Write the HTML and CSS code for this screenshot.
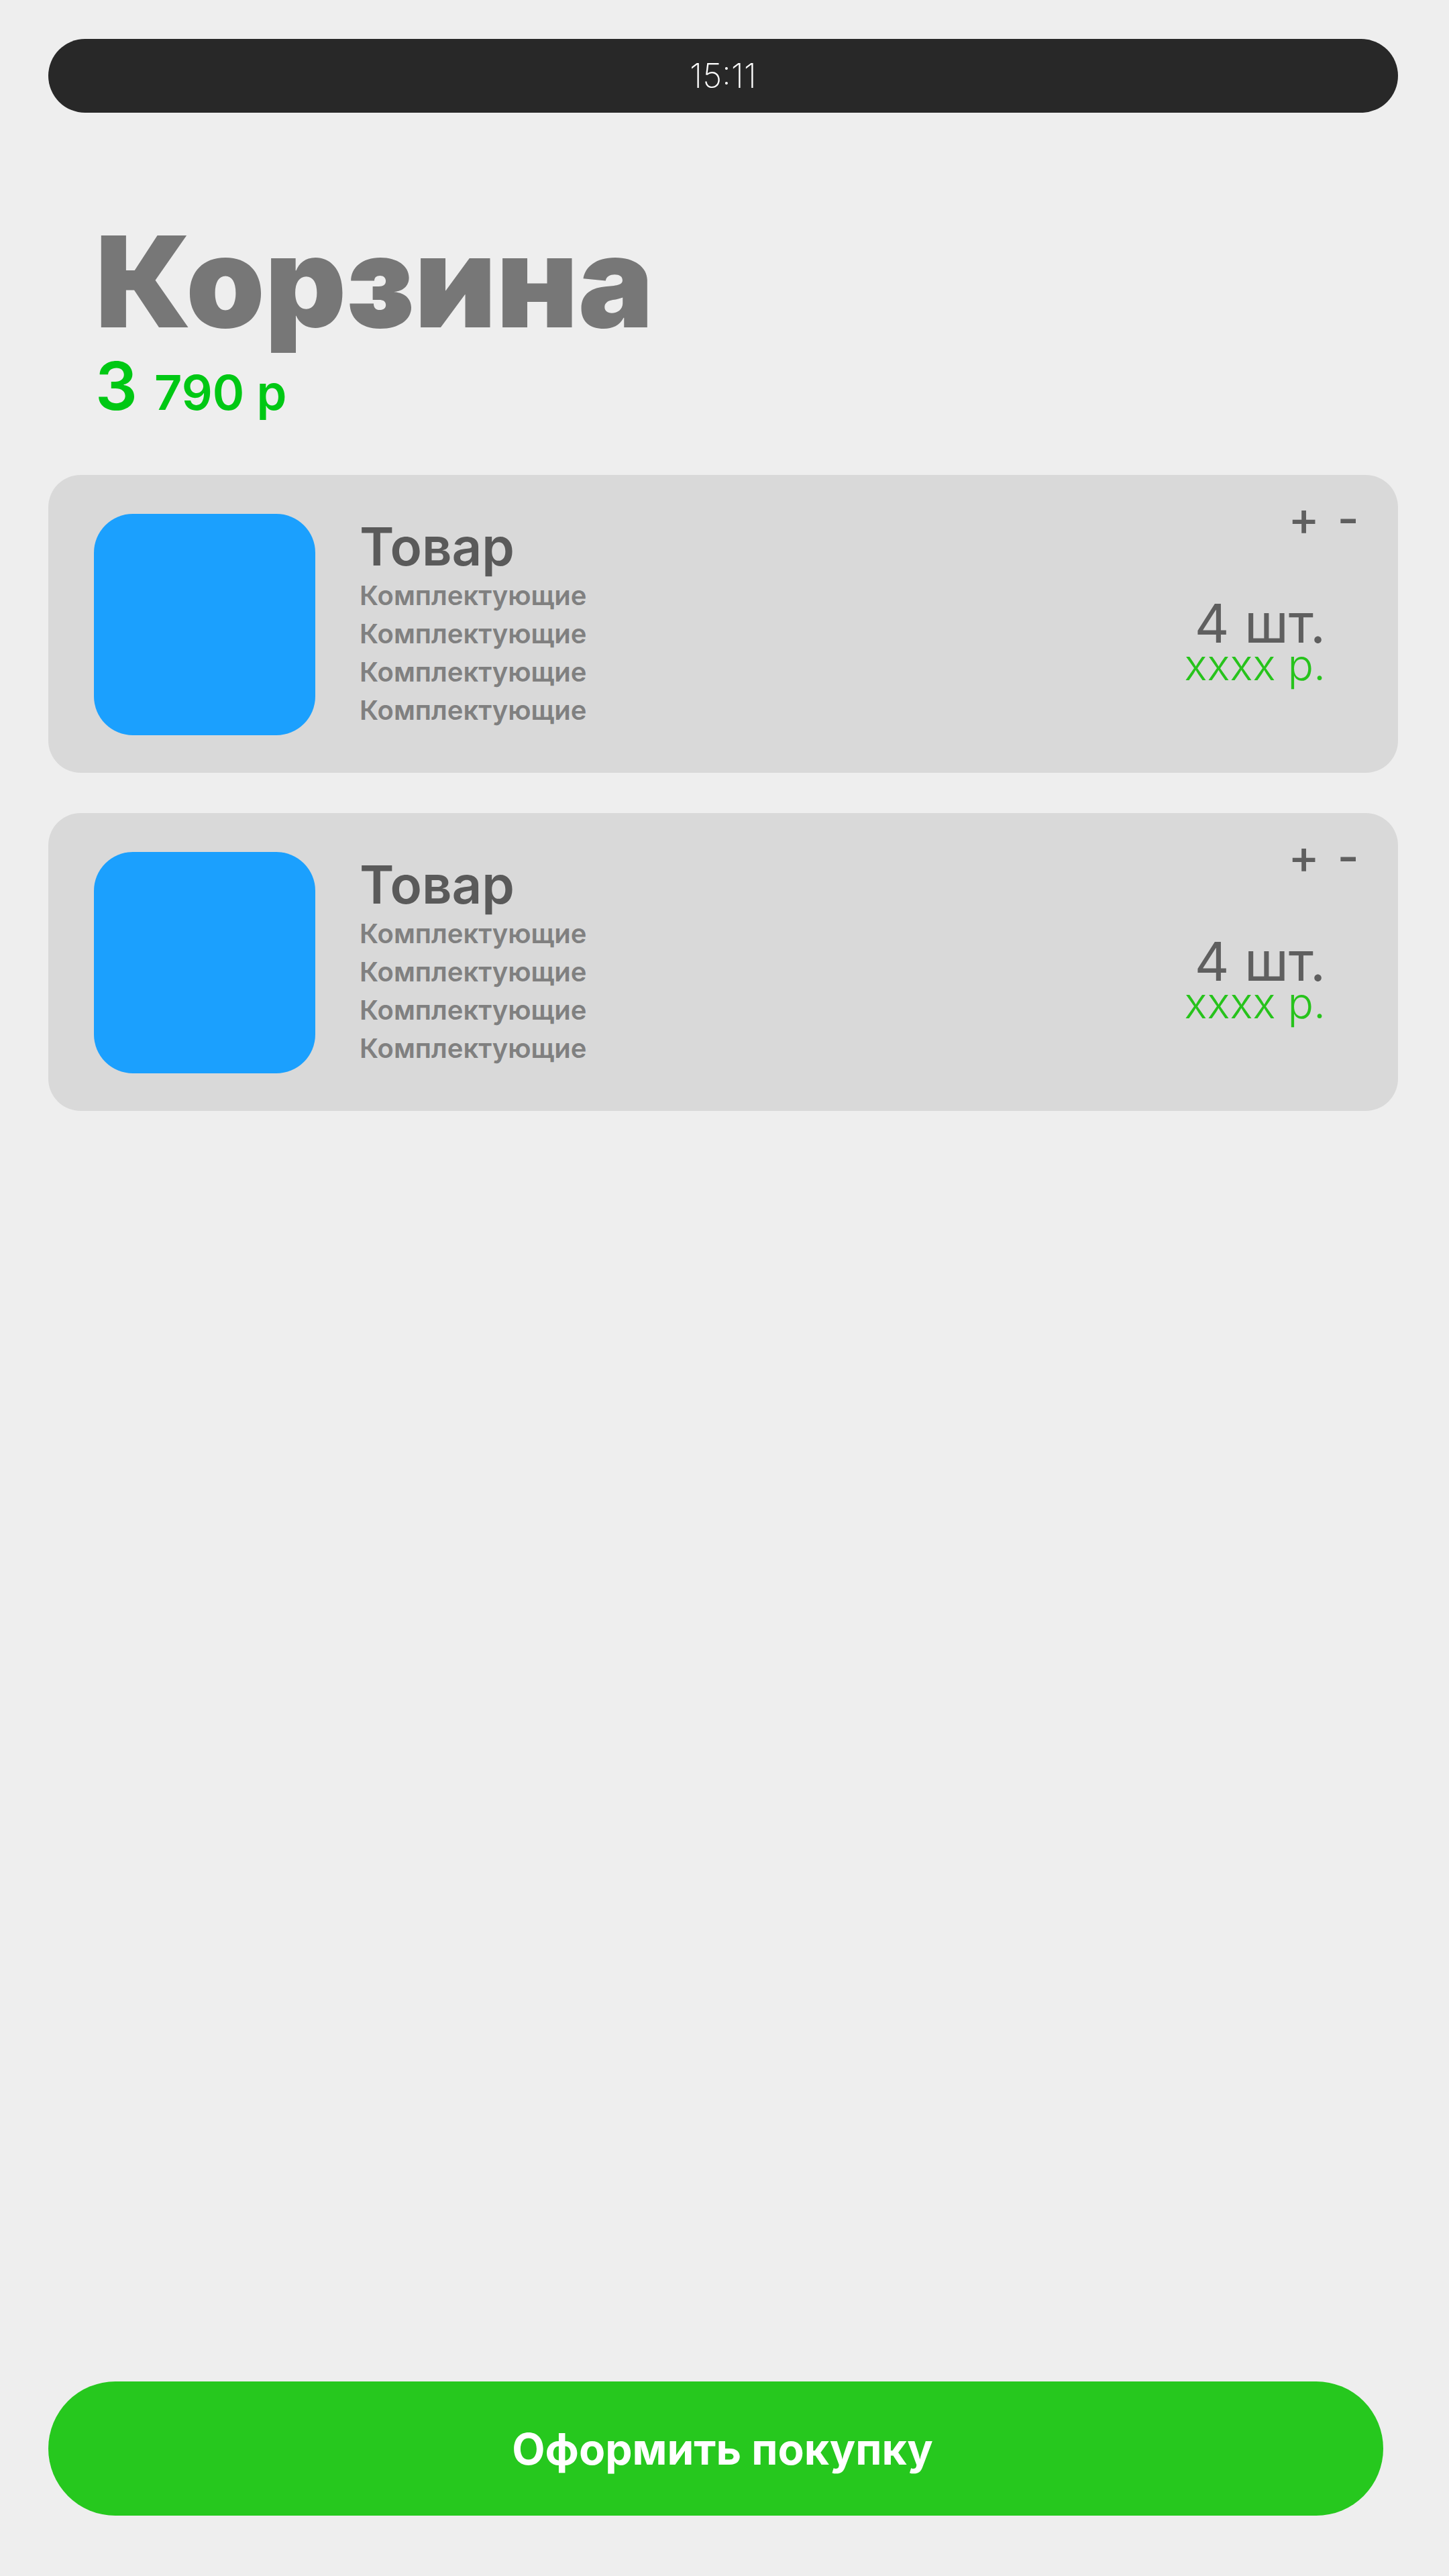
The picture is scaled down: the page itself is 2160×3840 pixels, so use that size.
FILE: index.html
```html
<!DOCTYPE html>
<html lang="ru">
<head>
<meta charset="utf-8">
<title>Корзина</title>
<link rel="stylesheet" href="styles.css">
</head>
<body>
  <div class="status">15:11</div>
  <header class="head">
    <h1 class="title">Корзина</h1>
    <div class="total">3 <span class="total-rest">790 р</span></div>
  </header>
  <main class="list">
    <section class="card">
      <div class="thumb"></div>
      <div class="info">
        <div class="name">Товар</div>
        <div class="part">Комплектующие</div>
        <div class="part">Комплектующие</div>
        <div class="part">Комплектующие</div>
        <div class="part">Комплектующие</div>
      </div>
      <div class="side">
        <div class="ctrl">+ -</div>
        <div class="qty">
          <div class="count">4 шт.</div>
          <div class="price">хххх р.</div>
        </div>
      </div>
    </section>
    <section class="card">
      <div class="thumb"></div>
      <div class="info">
        <div class="name">Товар</div>
        <div class="part">Комплектующие</div>
        <div class="part">Комплектующие</div>
        <div class="part">Комплектующие</div>
        <div class="part">Комплектующие</div>
      </div>
      <div class="side">
        <div class="ctrl">+ -</div>
        <div class="qty">
          <div class="count">4 шт.</div>
          <div class="price">хххх р.</div>
        </div>
      </div>
    </section>
  </main>
  <button class="buy">Оформить покупку</button>
</body>
</html>
```
FILE: styles.css
```css
* { box-sizing: border-box; }
html, body { margin: 0; }
body {
  background: #eeeeee;
  font-family: Inter, "Noto Sans", sans-serif;
  width: 2160px;
  height: 3840px;
  padding: 58px 76px 90px 72px;
  display: flex;
  flex-direction: column;
}
.status {
  height: 110px;
  border-radius: 55px;
  background: #282828;
  color: #ffffff;
  font-size: 50px;
  font-weight: 200;
  line-height: 110px;
  text-align: center;
}
.head {
  padding-left: 70px;
  margin-top: 158px;
}
.title {
  margin: 0;
  font-size: 188px;
  font-weight: 900;
  line-height: 1;
  color: #777777;
}
.total {
  margin-top: 12px;
  font-size: 99px;
  line-height: 1;
  font-weight: 600;
  color: #00c814;
}
.total-rest { font-size: 72px; }
.list {
  margin-top: 83px;
  display: flex;
  flex-direction: column;
  gap: 60px;
}
.card {
  display: flex;
  align-items: flex-start;
  gap: 66px;
  padding: 58px 58px 56px 68px;
  background: #d9d9d9;
  border-radius: 48px;
}
.thumb {
  width: 330px;
  height: 330px;
  flex: none;
  background: #1ba0fe;
  border-radius: 58px;
}
.info {
  flex: 1;
  margin-top: 5px;
}
.name {
  font-size: 78px;
  font-weight: 600;
  line-height: 88px;
  color: #5a5a5a;
}
.part {
  font-size: 40px;
  font-weight: 600;
  line-height: 57px;
  color: #808080;
}
.side {
  display: flex;
  flex-direction: column;
  align-items: flex-end;
}
.ctrl {
  margin-top: -28px;
  font-size: 70px;
  font-weight: 500;
  line-height: 70px;
  color: #5f5f5f;
  word-spacing: 8px;
}
.qty {
  margin-top: 85px;
  margin-right: 50px;
  text-align: right;
}
.count {
  font-size: 80px;
  font-weight: 400;
  line-height: 72px;
  color: #5f5f5f;
}
.price {
  font-size: 64px;
  font-weight: 300;
  line-height: 52px;
  color: #27c31c;
}
.buy {
  margin-top: auto;
  width: 1990px;
  height: 200px;
  border: none;
  border-radius: 100px;
  background: #26c81e;
  color: #ffffff;
  font-family: Inter, "Noto Sans", sans-serif;
  font-size: 64px;
  font-weight: 700;
  padding: 0 0 0 20px;
}
```
